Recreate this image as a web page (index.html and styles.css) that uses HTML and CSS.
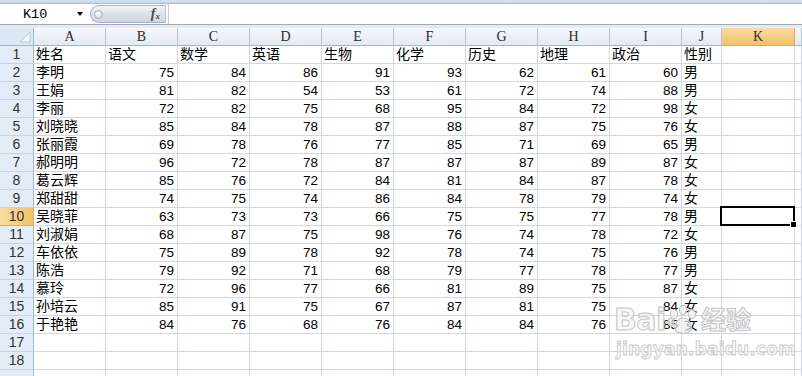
FILE: index.html
```html
<!DOCTYPE html>
<html lang="zh">
<head>
<meta charset="utf-8">
<title>Excel</title>
<link rel="stylesheet" href="styles.css">
</head>
<body>
<div class="edge"></div>
<div class="fbar">
  <div class="namebox"><span class="ref">K10</span><span class="arrow"></span></div>
  <div class="pill"><span class="dot"></span><span class="fx">f<sub>x</sub></span></div>
  <div class="input"></div>
</div>
<div class="gap"></div>
<div class="sheet">
  <div class="row head">
    <div class="corner"><svg width="12" height="12" viewBox="0 0 12 12"><polygon points="11,1 11,11 1,11" fill="#f5f8fc" stroke="#b6c6da" stroke-width="1"/></svg></div>
    <div class="ch">A</div><div class="ch">B</div><div class="ch">C</div><div class="ch">D</div><div class="ch">E</div><div class="ch">F</div><div class="ch">G</div><div class="ch">H</div><div class="ch">I</div><div class="ch">J</div><div class="ch sel">K</div><div class="ch"></div>
  </div>
  <div class="row"><div class="rh">1</div><div class="c t">姓名</div><div class="c t">语文</div><div class="c t">数学</div><div class="c t">英语</div><div class="c t">生物</div><div class="c t">化学</div><div class="c t">历史</div><div class="c t">地理</div><div class="c t">政治</div><div class="c t">性别</div><div class="c"></div><div class="c"></div></div>
  <div class="row"><div class="rh">2</div><div class="c t">李明</div><div class="c n">75</div><div class="c n">84</div><div class="c n">86</div><div class="c n">91</div><div class="c n">93</div><div class="c n">62</div><div class="c n">61</div><div class="c n">60</div><div class="c t">男</div><div class="c"></div><div class="c"></div></div>
  <div class="row"><div class="rh">3</div><div class="c t">王娟</div><div class="c n">81</div><div class="c n">82</div><div class="c n">54</div><div class="c n">53</div><div class="c n">61</div><div class="c n">72</div><div class="c n">74</div><div class="c n">88</div><div class="c t">男</div><div class="c"></div><div class="c"></div></div>
  <div class="row"><div class="rh">4</div><div class="c t">李丽</div><div class="c n">72</div><div class="c n">82</div><div class="c n">75</div><div class="c n">68</div><div class="c n">95</div><div class="c n">84</div><div class="c n">72</div><div class="c n">98</div><div class="c t">女</div><div class="c"></div><div class="c"></div></div>
  <div class="row"><div class="rh">5</div><div class="c t">刘晓晓</div><div class="c n">85</div><div class="c n">84</div><div class="c n">78</div><div class="c n">87</div><div class="c n">88</div><div class="c n">87</div><div class="c n">75</div><div class="c n">76</div><div class="c t">女</div><div class="c"></div><div class="c"></div></div>
  <div class="row"><div class="rh">6</div><div class="c t">张丽霞</div><div class="c n">69</div><div class="c n">78</div><div class="c n">76</div><div class="c n">77</div><div class="c n">85</div><div class="c n">71</div><div class="c n">69</div><div class="c n">65</div><div class="c t">男</div><div class="c"></div><div class="c"></div></div>
  <div class="row"><div class="rh">7</div><div class="c t">郝明明</div><div class="c n">96</div><div class="c n">72</div><div class="c n">78</div><div class="c n">87</div><div class="c n">87</div><div class="c n">87</div><div class="c n">89</div><div class="c n">87</div><div class="c t">女</div><div class="c"></div><div class="c"></div></div>
  <div class="row"><div class="rh">8</div><div class="c t">葛云辉</div><div class="c n">85</div><div class="c n">76</div><div class="c n">72</div><div class="c n">84</div><div class="c n">81</div><div class="c n">84</div><div class="c n">87</div><div class="c n">78</div><div class="c t">女</div><div class="c"></div><div class="c"></div></div>
  <div class="row"><div class="rh">9</div><div class="c t">郑甜甜</div><div class="c n">74</div><div class="c n">75</div><div class="c n">74</div><div class="c n">86</div><div class="c n">84</div><div class="c n">78</div><div class="c n">79</div><div class="c n">74</div><div class="c t">女</div><div class="c"></div><div class="c"></div></div>
  <div class="row"><div class="rh selr">10</div><div class="c t">吴晓菲</div><div class="c n">63</div><div class="c n">73</div><div class="c n">73</div><div class="c n">66</div><div class="c n">75</div><div class="c n">75</div><div class="c n">77</div><div class="c n">78</div><div class="c t">男</div><div class="c active"><span class="handle"></span></div><div class="c"></div></div>
  <div class="row"><div class="rh">11</div><div class="c t">刘淑娟</div><div class="c n">68</div><div class="c n">87</div><div class="c n">75</div><div class="c n">98</div><div class="c n">76</div><div class="c n">74</div><div class="c n">78</div><div class="c n">72</div><div class="c t">女</div><div class="c"></div><div class="c"></div></div>
  <div class="row"><div class="rh">12</div><div class="c t">车依依</div><div class="c n">75</div><div class="c n">89</div><div class="c n">78</div><div class="c n">92</div><div class="c n">78</div><div class="c n">74</div><div class="c n">75</div><div class="c n">76</div><div class="c t">男</div><div class="c"></div><div class="c"></div></div>
  <div class="row"><div class="rh">13</div><div class="c t">陈浩</div><div class="c n">79</div><div class="c n">92</div><div class="c n">71</div><div class="c n">68</div><div class="c n">79</div><div class="c n">77</div><div class="c n">78</div><div class="c n">77</div><div class="c t">男</div><div class="c"></div><div class="c"></div></div>
  <div class="row"><div class="rh">14</div><div class="c t">慕玲</div><div class="c n">72</div><div class="c n">96</div><div class="c n">77</div><div class="c n">66</div><div class="c n">81</div><div class="c n">89</div><div class="c n">75</div><div class="c n">87</div><div class="c t">女</div><div class="c"></div><div class="c"></div></div>
  <div class="row"><div class="rh">15</div><div class="c t">孙培云</div><div class="c n">85</div><div class="c n">91</div><div class="c n">75</div><div class="c n">67</div><div class="c n">87</div><div class="c n">81</div><div class="c n">75</div><div class="c n">84</div><div class="c t">女</div><div class="c"></div><div class="c"></div></div>
  <div class="row"><div class="rh">16</div><div class="c t">于艳艳</div><div class="c n">84</div><div class="c n">76</div><div class="c n">68</div><div class="c n">76</div><div class="c n">84</div><div class="c n">84</div><div class="c n">76</div><div class="c n">85</div><div class="c t">女</div><div class="c"></div><div class="c"></div></div>
  <div class="row"><div class="rh">17</div><div class="c"></div><div class="c"></div><div class="c"></div><div class="c"></div><div class="c"></div><div class="c"></div><div class="c"></div><div class="c"></div><div class="c"></div><div class="c"></div><div class="c"></div><div class="c"></div></div>
  <div class="row"><div class="rh">18</div><div class="c"></div><div class="c"></div><div class="c"></div><div class="c"></div><div class="c"></div><div class="c"></div><div class="c"></div><div class="c"></div><div class="c"></div><div class="c"></div><div class="c"></div><div class="c"></div></div>
  <div class="row"><div class="rh"></div><div class="c"></div><div class="c"></div><div class="c"></div><div class="c"></div><div class="c"></div><div class="c"></div><div class="c"></div><div class="c"></div><div class="c"></div><div class="c"></div><div class="c"></div><div class="c"></div></div>
</div>
<div class="watermark">
  <div class="wm-top"><span class="wm-bai">Bai</span><svg class="paw" width="32" height="30" viewBox="0 0 32 30"><g fill="rgba(240,240,240,0.7)" stroke="#c6c6c6" stroke-width="1.2"><ellipse cx="7" cy="9" rx="3.6" ry="4.6"/><ellipse cx="16" cy="5" rx="3.6" ry="4.6"/><ellipse cx="25" cy="9" rx="3.6" ry="4.6"/><ellipse cx="4" cy="17" rx="3" ry="3.6"/><path d="M16 13 C9 13 6 23 9 26 C12 29 20 29 23 26 C26 23 23 13 16 13 Z"/></g></svg><span class="wm-jy">经验</span></div>
  <div class="wm-url">jingyan.baidu.com</div>
</div>
</body>
</html>
```

FILE: styles.css
```css
html, body {
  margin: 0;
  padding: 0;
}
body {
  width: 802px;
  height: 376px;
  overflow: hidden;
  position: relative;
  background: #ffffff;
  font-family: "Liberation Sans", "Noto Sans CJK SC", sans-serif;
  color: #000;
}
.edge {
  height: 3px;
  background: linear-gradient(#d7e3f2, #c6d6ea);
  border-bottom: 1px solid #a9bcd4;
}
.fbar {
  height: 20px;
  display: flex;
  align-items: stretch;
  background: #ffffff;
  border-bottom: 1px solid #9daabb;
}
.namebox {
  width: 88px;
  display: flex;
  align-items: center;
  padding-left: 23px;
  box-sizing: border-box;
  font-family: "Liberation Mono", monospace;
  font-size: 13.5px;
}
.arrow {
  margin-left: auto;
  margin-right: 5px;
  width: 0;
  height: 0;
  border-left: 3.5px solid transparent;
  border-right: 3.5px solid transparent;
  border-top: 4px solid #000;
}
.pill {
  margin: 1px 0 1px 2px;
  width: 76px;
  box-sizing: border-box;
  border: 1px solid #a1afc2;
  border-right: 1px solid #bfc8d3;
  border-radius: 9px 0 0 9px;
  background: linear-gradient(#f4f6f9, #dde2e9 50%, #cfd6e0);
  display: flex;
  align-items: center;
  padding-left: 3px;
}
.dot {
  width: 9px;
  height: 9px;
  border-radius: 50%;
  background: radial-gradient(circle at 40% 35%, #ffffff, #c4ccd7);
  border: 1px solid #aab4c2;
  box-sizing: border-box;
}
.fx {
  margin-left: auto;
  margin-right: 5px;
  font-family: "Liberation Serif", serif;
  font-style: italic;
  font-weight: bold;
  font-size: 14px;
  color: #4a4a4a;
  line-height: 1;
}
.fx sub {
  font-size: 9px;
  vertical-align: -1px;
}
.input {
  flex: 1;
  margin-left: 2px;
  border-left: 1px solid #c6cfda;
}
.gap {
  height: 3px;
  background: #e4ebf4;
}
.sheet {
  display: flex;
  flex-direction: column;
}
.row {
  display: grid;
  grid-template-columns: 34px repeat(9, 72px) 40px 73px 1fr;
  height: 18px;
}
.row > div {
  box-sizing: border-box;
  height: 18px;
  border-right: 1px solid #d0d7e5;
  border-bottom: 1px solid #d0d7e5;
  font-size: 14px;
  line-height: 17px;
  white-space: nowrap;
}
.row.head > div {
  background: linear-gradient(#f6f8fb, #e3e9f2);
  border-right: 1px solid #b8c6d8;
  border-bottom: 1px solid #9eb6ce;
  text-align: center;
  font-family: "Liberation Serif", serif;
  font-size: 14px;
  color: #2a2a2a;
}
.row.head > .corner {
  background: #dde6f2;
  border-right: 1px solid #9eb6ce;
  display: flex;
  align-items: flex-end;
  justify-content: flex-end;
  padding: 0 2px 2px 0;
}
.corner svg {
  display: block;
}
.row.head > .sel {
  background: linear-gradient(#f9dca4, #f1c26a);
  border-right: 1px solid #e3a857;
  border-bottom: 1px solid #e3a857;
  color: #333;
}
.row > .rh {
  background: #e4ecf7;
  border-right: 1px solid #9eb6ce;
  border-bottom: 1px solid #c5d3e4;
  text-align: center;
  color: #333;
  font-size: 14px;
}
.row > .rh.selr {
  background: linear-gradient(90deg, #f9dca4, #f1c26a);
  border-bottom: 1px solid #e3a857;
  border-right: 1px solid #e3a857;
}
.t {
  padding-left: 2px;
}
.row > .n {
  text-align: right;
  padding-right: 3px;
  font-size: 13.5px;
}
.row > .active {
  position: relative;
}
.active::before {
  content: "";
  position: absolute;
  left: -2px;
  top: -2px;
  right: -1px;
  bottom: -1px;
  border: 2px solid #000;
}
.handle {
  position: absolute;
  right: -3px;
  bottom: -3px;
  width: 5px;
  height: 5px;
  background: #000;
  border: 1px solid #fff;
  box-sizing: content-box;
  z-index: 2;
}
.watermark {
  position: absolute;
  left: 614px;
  top: 305px;
  width: 160px;
  pointer-events: none;
}
.wm-top {
  display: flex;
  align-items: center;
  height: 30px;
}
.wm-bai {
  font-family: "DejaVu Sans", sans-serif;
  font-weight: bold;
  font-size: 30px;
  line-height: 30px;
  letter-spacing: -0.5px;
  color: rgba(245, 245, 245, 0.65);
  -webkit-text-stroke: 1px #c4c4c4;
}
.paw {
  display: block;
  margin-left: 1px;
}
.wm-jy {
  font-family: "Liberation Sans", "Noto Sans CJK SC", sans-serif;
  font-weight: bold;
  font-size: 25px;
  line-height: 30px;
  margin-left: 2px;
  color: rgba(245, 245, 245, 0.65);
  -webkit-text-stroke: 1px #c4c4c4;
}
.wm-url {
  font-family: "DejaVu Sans", sans-serif;
  font-weight: bold;
  font-size: 17px;
  line-height: 18px;
  margin-top: 5px;
  padding-left: 2px;
  letter-spacing: 0.2px;
  color: rgba(245, 245, 245, 0.65);
  -webkit-text-stroke: 0.8px #c8c8c8;
}
```
